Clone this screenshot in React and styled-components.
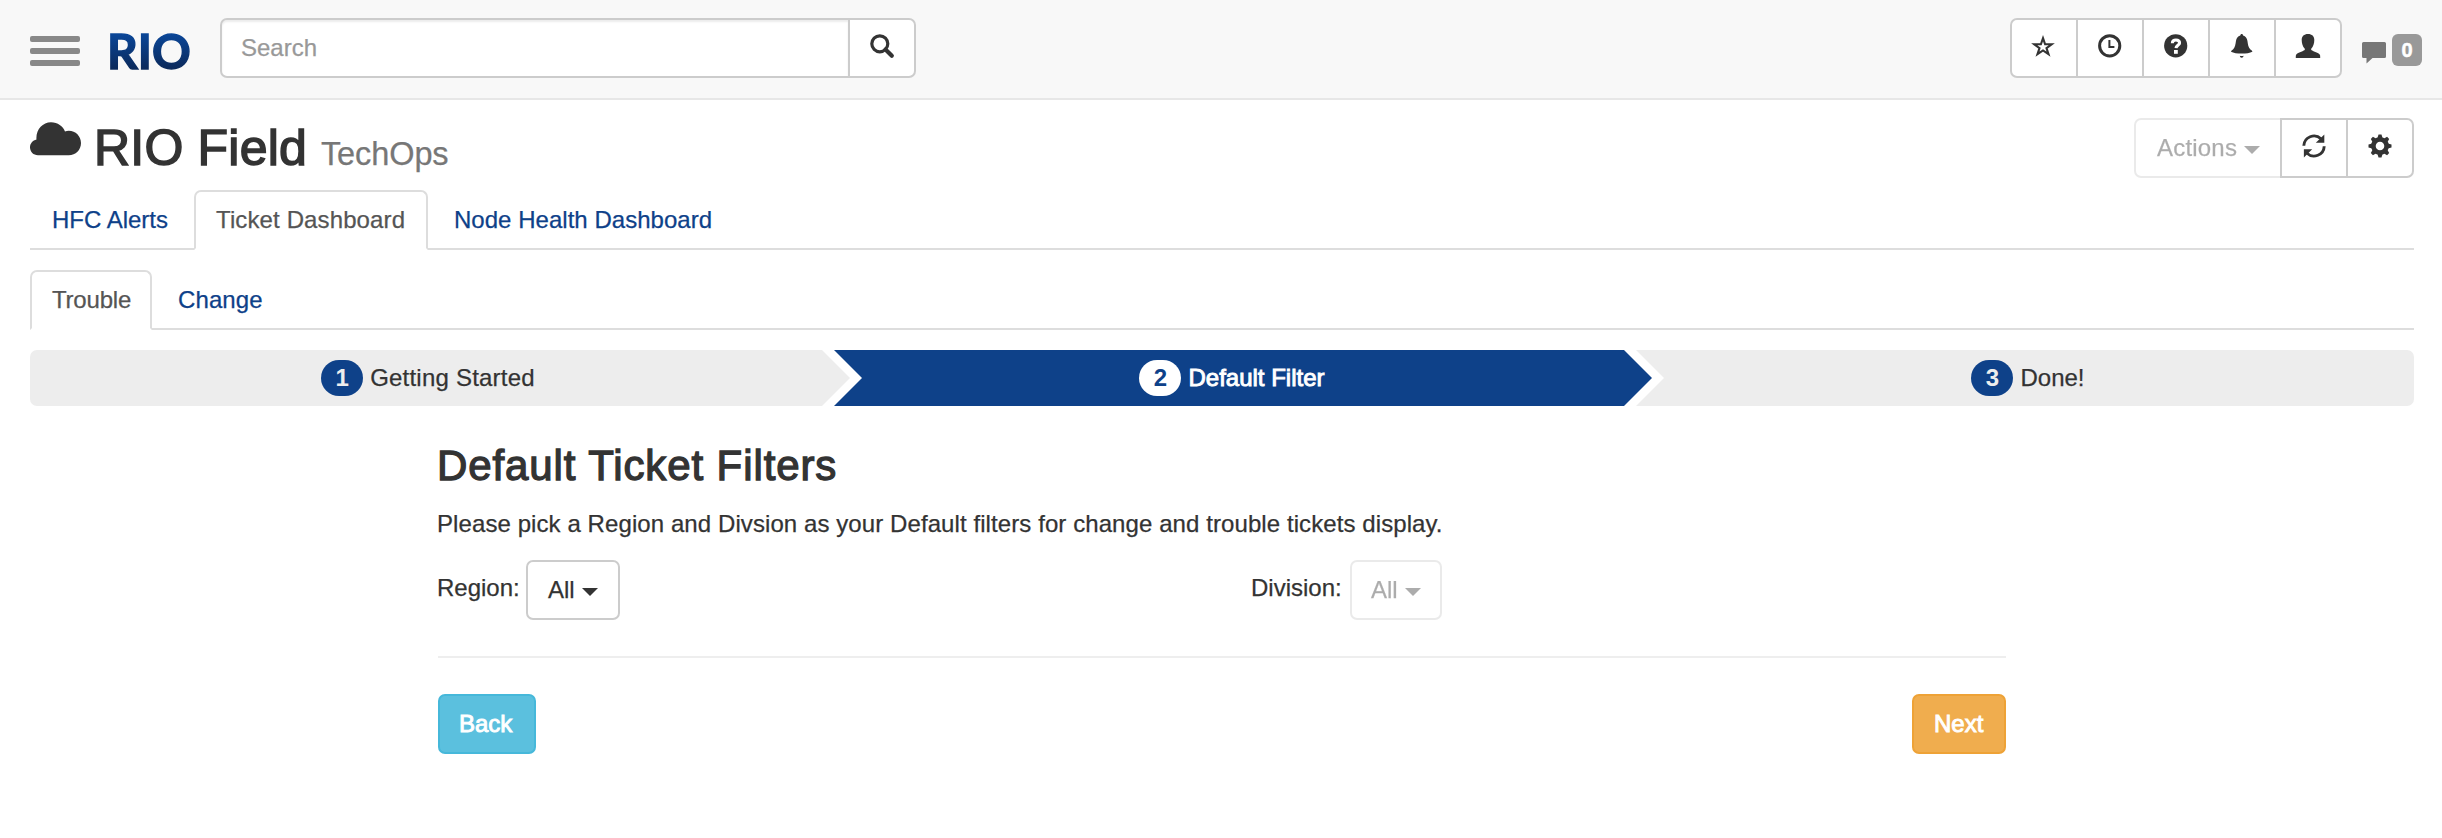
import React from "react";
import styled, { createGlobalStyle, css } from "styled-components";

const GlobalStyle = createGlobalStyle`
  *, *::before, *::after { box-sizing: border-box; }
  body {
    margin: 0;
    background: #fff;
    color: #333;
    font: 24px/34px "Liberation Sans", Arial, sans-serif;
    -webkit-text-stroke: 0.25px currentColor;
  }
  ul, ol { margin: 0; padding: 0; list-style: none; }
  h1, h2, p { margin: 0; font-weight: 400; }
`;

const blue = "#0e4189";

/* ---------- shared ---------- */

const Text = styled.span`
  letter-spacing: ${(p) => p.$track || 0}px;
  white-space: nowrap;
`;

const Glyph = styled.svg`
  display: block;
  flex: none;
  fill: currentColor;
  overflow: visible;
`;

const Caret = styled.span`
  width: 0;
  height: 0;
  margin-top: 4px;
  border: 8px solid transparent;
  border-top-color: currentColor;
  border-bottom: 0;
`;

const variants = {
  default: css`background: #fff; border-color: #ccc; color: #333;`,
  info: css`background: #5bc0de; border-color: #46b8da; color: #fff; -webkit-text-stroke: 0.9px #fff;`,
  warning: css`background: #f0ad4e; border-color: #eea236; color: #fff; -webkit-text-stroke: 0.9px #fff;`,
};

const Button = styled.button`
  display: flex;
  align-items: center;
  gap: 7px;
  width: ${(p) => p.$width}px;
  height: 60px;
  padding: 0 0 0 ${(p) => p.$pad ?? 20}px;
  border: 2px solid;
  border-radius: 7px;
  font: inherit;
  ${(p) => variants[p.$variant || "default"]}
  &:disabled { opacity: ${(p) => (p.$faded ? 0.4 : 1)}; }
`;

const IconButton = styled(Button)`
  width: 68px;
  justify-content: center;
  padding: 0 0 4px;
`;

const ButtonGroup = styled.div`
  display: flex;
  & > * + * { margin-left: -2px; }
  & > *:not(:first-child) { border-top-left-radius: 0; border-bottom-left-radius: 0; }
  & > *:not(:last-child) { border-top-right-radius: 0; border-bottom-right-radius: 0; }
`;

/* ---------- top bar ---------- */

const TopBar = styled.header`
  display: flex;
  align-items: flex-start;
  height: 100px;
  padding: 18px 20px 0 30px;
  background: #f8f8f8;
  border-bottom: 2px solid #e7e7e7;
`;

const MenuToggle = styled.div`
  display: flex;
  flex-direction: column;
  gap: 6px;
  width: 50px;
  margin-top: 18px;
`;

const MenuBar = styled.span`
  height: 6px;
  border-radius: 2px;
  background: #888;
`;

const Logo = styled.div`
  width: 114px;
  height: 60px;
  padding-left: 27px;
  font: 700 48px/65px Lato, sans-serif;
  color: transparent;
  background: linear-gradient(#0a4596 28%, #0b2a5c 84%);
  -webkit-background-clip: text;
  background-clip: text;
  -webkit-text-stroke: 1.4px transparent;
`;

const SearchField = styled.div`
  display: flex;
  align-items: center;
  width: 630px;
  height: 60px;
  padding-left: 19px;
  background: #fff;
  border: 2px solid #ccc;
  border-radius: 7px;
  box-shadow: inset 0 2px 2px rgba(0, 0, 0, 0.075);
  color: #999;
`;

const SearchGroup = styled(ButtonGroup)`
  margin-left: 26px;
`;

const HeaderActions = styled.div`
  display: flex;
  margin-left: auto;
`;

const Messages = styled.div`
  display: flex;
  margin: 16px 0 0 20px;
  gap: 6px;
  color: #777;
`;

const CommentGlyph = styled(Glyph)`
  margin-top: 8px;
`;

const Count = styled.span`
  width: 30px;
  height: 32px;
  border-radius: 6px;
  background: #999;
  color: #fff;
  font-size: 20px;
  font-weight: 700;
  line-height: 32px;
  text-align: center;
  -webkit-text-stroke: 0.5px #fff;
`;

/* ---------- page heading ---------- */

const Page = styled.main`
  padding: 18px 28px 0 30px;
`;

const Heading = styled.div`
  display: flex;
  justify-content: space-between;
  height: 72px;
`;

const Title = styled.h1`
  display: flex;
  align-items: baseline;
  font-size: 50px;
  line-height: 61px;
  letter-spacing: 0.2px;
  -webkit-text-stroke: 1.5px #333;
  white-space: nowrap;
`;

const CloudGlyph = styled(Glyph)`
  align-self: flex-start;
  margin: 4px 13px 0 0;
`;

const Subtitle = styled.small`
  margin-left: 14px;
  font-size: 32.5px;
  letter-spacing: -0.1px;
  color: #777;
  -webkit-text-stroke: 0.25px #777;
`;

/* ---------- tabs ---------- */

const Tabs = styled.ul`
  display: flex;
  gap: 4px;
  height: 60px;
  margin-bottom: 20px;
  box-shadow: inset 0 -2px #ddd;
`;

const Tab = styled.li`
  width: ${(p) => p.$width}px;
  height: 60px;
  padding: 11px 0 0 ${(p) => p.$pad ?? 20}px;
  border: 2px solid transparent;
  border-radius: 7px 7px 0 0;
  color: ${blue};
  ${(p) =>
    p.$active &&
    css`
      color: #555;
      background: #fff;
      border-color: #ddd;
      border-bottom-color: #fff;
    `}
`;

/* ---------- wizard steps ---------- */

const Steps = styled.ol`
  display: flex;
  height: 56px;
`;

const notch = "28px 50%";
const stepShapes = {
  first: css`
    width: 820px;
    padding-right: 24px;
    border-radius: 7px 0 0 7px;
    clip-path: polygon(0 0, calc(100% - 28px) 0, 100% 50%, calc(100% - 28px) 100%, 0 100%);
  `,
  middle: css`
    width: 818px;
    margin-left: -16px;
    padding-right: 22px;
    clip-path: polygon(0 0, calc(100% - 28px) 0, 100% 50%, calc(100% - 28px) 100%, 0 100%, ${notch});
  `,
  last: css`
    width: 778px;
    margin-left: -16px;
    padding-left: 6px;
    border-radius: 0 7px 7px 0;
    clip-path: polygon(0 0, 100% 0, 100% 100%, 0 100%, ${notch});
  `,
};

const Step = styled.li`
  display: flex;
  flex: none;
  align-items: center;
  justify-content: center;
  gap: 7px;
  ${(p) => stepShapes[p.$shape]}
  background: ${(p) => (p.$active ? blue : "#ededed")};
  color: ${(p) => (p.$active ? "#fff" : "#333")};
  -webkit-text-stroke: ${(p) => (p.$active ? "0.9px #fff" : "0.25px #333")};
`;

const StepBadge = styled.span`
  width: 42px;
  height: 36px;
  border-radius: 20px;
  background: ${(p) => (p.$active ? "#fff" : blue)};
  color: ${(p) => (p.$active ? blue : "#ededed")};
  font-weight: 700;
  line-height: 36px;
  text-align: center;
  -webkit-text-stroke: 0;
`;

/* ---------- filter form ---------- */

const Panel = styled.section`
  width: 1568px;
  margin: 36px 0 0 408px;
`;

const PanelTitle = styled.h2`
  margin-left: -1px;
  font-size: 42px;
  line-height: 48px;
  letter-spacing: 0.9px;
  -webkit-text-stroke: 1.3px #333;
`;

const Lead = styled.p`
  margin: 17px 0 0 -1px;
  letter-spacing: 0.085px;
`;

const Filters = styled.div`
  display: flex;
  margin-top: 19px;
`;

const Filter = styled.div`
  display: flex;
  width: ${(p) => p.$width}px;
`;

const FilterLabel = styled.label`
  width: ${(p) => p.$width}px;
  padding-top: 11px;
  text-indent: -1px;
`;

const Footer = styled.div`
  display: flex;
  justify-content: space-between;
  margin-top: 36px;
  padding-top: 36px;
  border-top: 2px solid #eee;
`;

/* ---------- icons ---------- */

const paths = {
  search: (
    <>
      <circle cx="9.8" cy="9.8" r="8" fill="none" stroke="currentColor" strokeWidth="3.2" />
      <path d="M15.5 15.5 21.8 21.8" fill="none" stroke="currentColor" strokeWidth="4.2" strokeLinecap="round" />
    </>
  ),
  star: (
    <path
      d="M11 4.2 13.1 10.3H19.700L14.500 14.200 16.500 20.200 11 16.500 5.500 20.200 7.500 14.200 2.300 10.300H8.900Z"
      fill="none"
      stroke="currentColor"
      strokeWidth="2.100"
    />
  ),
  clock: (
    <>
      <circle cx="11.700" cy="11.800" r="10.100" fill="none" stroke="currentColor" strokeWidth="3" />
      <path d="M10.400 5.900h2v6h4v2h-6z" />
    </>
  ),
  question: (
    <>
      <circle cx="11.700" cy="11.800" r="11.600" />
      <path d="M8.300 9.300C8.300 6.700 9.700 5.900 11.900 5.900S15.600 6.900 15.600 8.900 12.300 11.200 12 14.200" fill="none" stroke="#fff" strokeWidth="3" />
      <path d="M10 16h3.800v3.800H10z" fill="#fff" />
    </>
  ),
  bell: (
    <>
      <path d="M10.300 1.600C10.300.5 10.900 0 11.700 0s1.400.5 1.400 1.600c2.500.7 3.900 2.600 4.300 5.200.5 3.600.9 6.600 3 8.600 1 .9 2 1.300 2 2.300C20 18.900 16 19.600 11.700 19.600S3.400 18.900 1 17.700c0-1 1-1.400 2-2.300 2.100-2 2.500-5 3-8.600.4-2.600 1.800-4.500 4.300-5.200z" />
      <path d="M9.800 21.700c1.300.3 2.500.3 3.800 0-.2 1.200-.8 2-1.900 2s-1.700-.8-1.900-2z" />
    </>
  ),
  user: (
    <path d="M12 0c4 0 6.300 2.300 6.300 6 0 3.300-1 6.700-3.100 8.700v1.400c2.700 1.700 7.200 2.700 8.700 4.700.3.500.3 2 .3 3.200H-.2c0-1.200 0-2.700.3-3.200 1.500-2 6-3 8.700-4.700v-1.400C6.700 12.700 5.700 9.300 5.700 6 5.700 2.300 8 0 12 0z" />
  ),
  refresh: (
    <>
      <path d="M1.800 11.800A10.200 10.200 0 0 1 19 4.800" fill="none" stroke="currentColor" strokeWidth="2.900" />
      <path d="M22.300.4V8.700H13.800z" />
      <path d="M22.200 12.200A10.200 10.200 0 0 1 5 19.200" fill="none" stroke="currentColor" strokeWidth="2.900" />
      <path d="M1.900 23.600V15.300H10.200z" />
    </>
  ),
  cog: (
    <>
      <circle cx="12" cy="12" r="6.600" fill="none" stroke="currentColor" strokeWidth="4.600" />
      {[0, 45, 90, 135, 180, 225, 270, 315].map((a) => (
        <path key={a} d="M9.400 4.200 10.500.5h3L14.600 4.200z" transform={`rotate(${a} 12 12)`} />
      ))}
    </>
  ),
};

const Icon = ({ name }) => (
  <Glyph width="24" height="24" viewBox="0 0 24 24">
    {paths[name]}
  </Glyph>
);

const steps = [
  { label: "Getting Started", shape: "first", track: 0.22 },
  { label: "Default Filter", shape: "middle", track: 0, active: true },
  { label: "Done!", shape: "last", track: 0 },
];

export default function App() {
  return (
    <>
      <GlobalStyle />
      <TopBar>
        <MenuToggle>
          <MenuBar />
          <MenuBar />
          <MenuBar />
        </MenuToggle>
        <Logo>RIO</Logo>
        <SearchGroup>
          <SearchField>Search</SearchField>
          <IconButton><Icon name="search" /></IconButton>
        </SearchGroup>
        <HeaderActions>
          <ButtonGroup>
            {["star", "clock", "question", "bell", "user"].map((n) => (
              <IconButton key={n}><Icon name={n} /></IconButton>
            ))}
          </ButtonGroup>
          <Messages>
            <CommentGlyph width="24" height="22" viewBox="0 0 24 22">
              <path d="M1.500 0h21A1.500 1.500 0 0 1 24 1.500v13a1.500 1.500 0 0 1-1.500 1.500H10.500L4.500 21.500V16H1.500A1.500 1.500 0 0 1 0 14.500v-13A1.500 1.500 0 0 1 1.500 0z" />
            </CommentGlyph>
            <Count>0</Count>
          </Messages>
        </HeaderActions>
      </TopBar>

      <Page>
        <Heading>
          <Title>
            <CloudGlyph width="51" height="34" viewBox="0 0 51 34">
              <path d="M21 .3c6.700 0 12 4 14 9.200 1.300-.6 2.500-.8 3.700-.8C45.700 8.700 51 14.200 51 21S45.700 33.300 38.700 33.300H8C3.400 33.300 0 29.700 0 25.300c0-4 2.800-7 6.500-7.900-.1-.5-.1-1-.1-1.500C6.400 7.200 12.900.3 21 .3z" />
            </CloudGlyph>
            RIO Field
            <Subtitle>TechOps</Subtitle>
          </Title>
          <ButtonGroup>
            <Button disabled $faded $width={148} $pad={21}>
              <Text $track={0.2}>Actions</Text>
              <Caret />
            </Button>
            <IconButton><Icon name="refresh" /></IconButton>
            <IconButton><Icon name="cog" /></IconButton>
          </ButtonGroup>
        </Heading>

        <Tabs>
          <Tab $width={160}><Text>HFC Alerts</Text></Tab>
          <Tab $width={234} $active><Text $track={0.12}>Ticket Dashboard</Text></Tab>
          <Tab $width={300}><Text $track={0.03}>Node Health Dashboard</Text></Tab>
        </Tabs>
        <Tabs>
          <Tab $width={122} $active><Text $track={-0.2}>Trouble</Text></Tab>
          <Tab $width={126}><Text $track={0.1}>Change</Text></Tab>
        </Tabs>

        <Steps>
          {steps.map((s, i) => (
            <Step key={s.label} $shape={s.shape} $active={s.active}>
              <StepBadge $active={s.active}>{i + 1}</StepBadge>
              <Text $track={s.track}>{s.label}</Text>
            </Step>
          ))}
        </Steps>

        <Panel>
          <PanelTitle>Default Ticket Filters</PanelTitle>
          <Lead>Please pick a Region and Divsion as your Default filters for change and trouble tickets display.</Lead>
          <Filters>
            <Filter $width={814}>
              <FilterLabel $width={88}>Region:</FilterLabel>
              <Button $width={94}>All<Caret /></Button>
            </Filter>
            <Filter $width={754}>
              <FilterLabel $width={98}>Division:</FilterLabel>
              <Button disabled $faded $width={92} $pad={19}>All<Caret /></Button>
            </Filter>
          </Filters>
          <Footer>
            <Button $variant="info" $width={98} $pad={19}>Back</Button>
            <Button $variant="warning" $width={94}>Next</Button>
          </Footer>
        </Panel>
      </Page>
    </>
  );
}
